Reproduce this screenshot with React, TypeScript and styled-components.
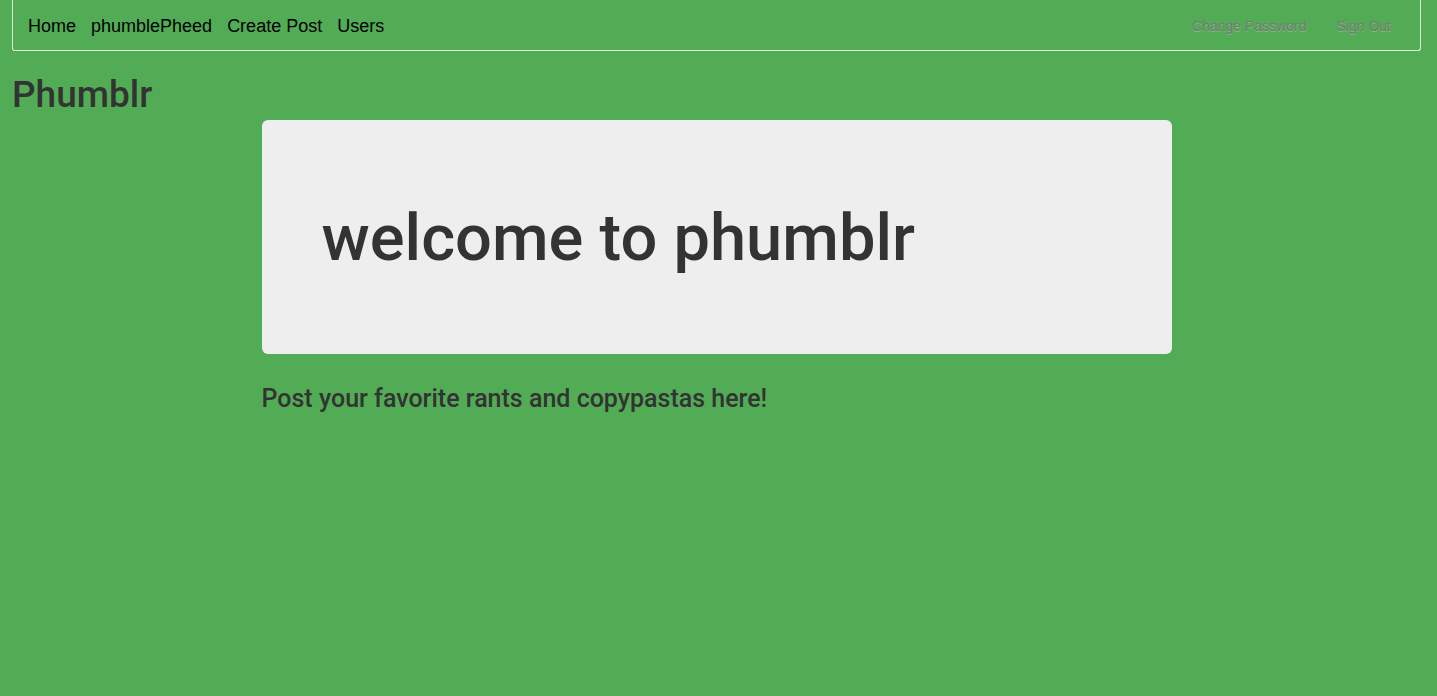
import React from "react";
import styled, { createGlobalStyle } from "styled-components";

const Global = createGlobalStyle`
  html, body { margin: 0; padding: 0; }
  body {
    background: #52ac55;
    font-family: "Liberation Sans", Arial, Helvetica, sans-serif;
    color: #333;
    min-height: 696px;
  }
`;

const Page = styled.div`
  padding: 0 16px 0 12px;
`;

const NavBar = styled.nav`
  display: flex;
  align-items: center;
  justify-content: space-between;
  height: 51px;
  box-sizing: border-box;
  border: 1px solid #e4efe4;
  border-top: none;
  border-radius: 0 0 3px 3px;
  padding: 2px 29px 0 15px;
`;

const NavGroup = styled.div<{ $gap: number }>`
  display: flex;
  align-items: center;
  gap: ${(p) => p.$gap}px;
`;

const NavLink = styled.a<{ $muted?: boolean }>`
  font-size: ${(p) => (p.$muted ? "14px" : "18px")};
  color: ${(p) => (p.$muted ? "#777" : "#000")};
  text-decoration: none;
  text-shadow: ${(p) => (p.$muted ? "0 1px 0 rgba(255,255,255,0.25)" : "none")};
  cursor: pointer;
  white-space: nowrap;
`;

const Brand = styled.h1`
  font-family: Roboto, "Liberation Sans", Arial, sans-serif;
  font-size: 37px;
  font-weight: 500;
  margin: 24px 0 0 0;
  line-height: 40px;
  color: #333;
`;

const Container = styled.main`
  width: 910px;
  margin: 5px auto 0;
  position: relative;
  left: -2px;
`;

const Jumbotron = styled.section`
  background: #eee;
  border-radius: 6px;
  height: 234px;
  box-sizing: border-box;
  padding: 0 60px;
  display: flex;
  align-items: center;
`;

const Hero = styled.h1`
  font-family: Roboto, "Liberation Sans", Arial, sans-serif;
  font-size: 65px;
  font-weight: 500;
  margin: 0;
  color: #333;
  line-height: 1;
  position: relative;
  top: 1px;
`;

const Tagline = styled.h3`
  font-family: Roboto, "Liberation Sans", Arial, sans-serif;
  font-size: 25px;
  font-weight: 500;
  margin: 30px 0 0 0;
  line-height: 30px;
  color: #333;
`;

export default function App() {
  return (
    <>
      <Global />
      <Page>
        <NavBar>
          <NavGroup $gap={15}>
            <NavLink>Home</NavLink>
            <NavLink>phumblePheed</NavLink>
            <NavLink>Create Post</NavLink>
            <NavLink>Users</NavLink>
          </NavGroup>
          <NavGroup $gap={30}>
            <NavLink $muted>Change Password</NavLink>
            <NavLink $muted>Sign Out</NavLink>
          </NavGroup>
        </NavBar>
        <Brand>Phumblr</Brand>
      </Page>
      <Container>
        <Jumbotron>
          <Hero>welcome to phumblr</Hero>
        </Jumbotron>
        <Tagline>Post your favorite rants and copypastas here!</Tagline>
      </Container>
    </>
  );
}
